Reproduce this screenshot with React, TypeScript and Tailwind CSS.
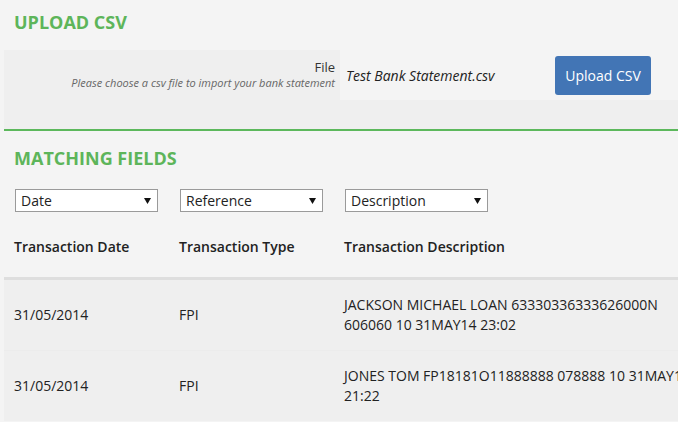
const rows = [
  {
    date: '31/05/2014',
    type: 'FPI',
    desc: 'JACKSON MICHAEL LOAN 63330336333626000N 606060 10 31MAY14 23:02',
  },
  {
    date: '31/05/2014',
    type: 'FPI',
    desc: 'JONES TOM FP18181O11888888 078888 10 31MAY14 21:22',
  },
]

const fields = ['Date', 'Reference', 'Description']

const FakeSelect = ({ value }: { value: string }) => (
  <div className="flex h-[23px] w-[143px] items-center justify-between border border-[#9a9a9a] bg-white pl-[5px] pr-[6px] text-[14px] leading-[20px]">
    <span>{value}</span>
    <svg width="7" height="6" viewBox="0 0 7 6">
      <polygon points="0,0 7,0 3.5,6" fill="#111" />
    </svg>
  </div>
)

const App = () => {
  return (
    <div className="h-[422px] w-[678px] overflow-hidden bg-[#f4f4f4] font-['Open_Sans',sans-serif] text-[#222]">
      <div className="ml-1 w-[800px]">
        <h2 className="h-[50px] pl-[10px] pt-[10px] text-[18px] font-bold leading-[24px] text-[#5db55a]">
          UPLOAD CSV
        </h2>

        <div className="h-[81px] w-[674px] border-b-2 border-[#5cb85c] bg-[#efefef]">
          <div className="flex h-[50px]">
            <div className="w-[336px] pr-[5px] pt-[8px] text-right">
              <div className="text-[13px] leading-[18px] text-[#333]">File</div>
              <div className="text-[11px] italic leading-[14px] text-[#666]">
                Please choose a csv file to import your bank statement
              </div>
            </div>
            <div className="flex flex-1 items-center bg-[#f4f4f4] pl-[6px]">
              <span className="w-[209px] text-[14px] italic">Test Bank Statement.csv</span>
              <button className="h-[39px] w-[96px] rounded-[3px] bg-[#4275b5] text-[14px] text-white">
                Upload CSV
              </button>
            </div>
          </div>
        </div>

        <h2 className="pl-[10px] pt-[15px] text-[18px] font-bold leading-[24px] text-[#5db55a]">
          MATCHING FIELDS
        </h2>

        <div className="mt-[19px] flex">
          {fields.map((f) => (
            <div key={f} className="w-[165px] pl-[11px]">
              <FakeSelect value={f} />
            </div>
          ))}
        </div>

        <div className="flex h-[65px] items-center pt-[5px] text-[14px] font-semibold leading-[20px]">
          <div className="w-[165px] pl-[10px]">Transaction Date</div>
          <div className="w-[165px] pl-[10px]">Transaction Type</div>
          <div className="w-[360px] pl-[10px]">Transaction Description</div>
        </div>

        <div className="border-t-[3px] border-[#dedede] bg-[#efefef] text-[14px] leading-[20px]">
          {rows.map((r, i) => (
            <div
              key={i}
              className={`flex items-center py-[15px] ${i > 0 ? 'border-t border-[#ececec]' : ''}`}
            >
              <div className="w-[165px] pl-[10px]">{r.date}</div>
              <div className="w-[165px] pl-[10px]">{r.type}</div>
              <div className="w-[360px] pl-[10px]">{r.desc}</div>
            </div>
          ))}
        </div>
      </div>
    </div>
  )
}

export default App
